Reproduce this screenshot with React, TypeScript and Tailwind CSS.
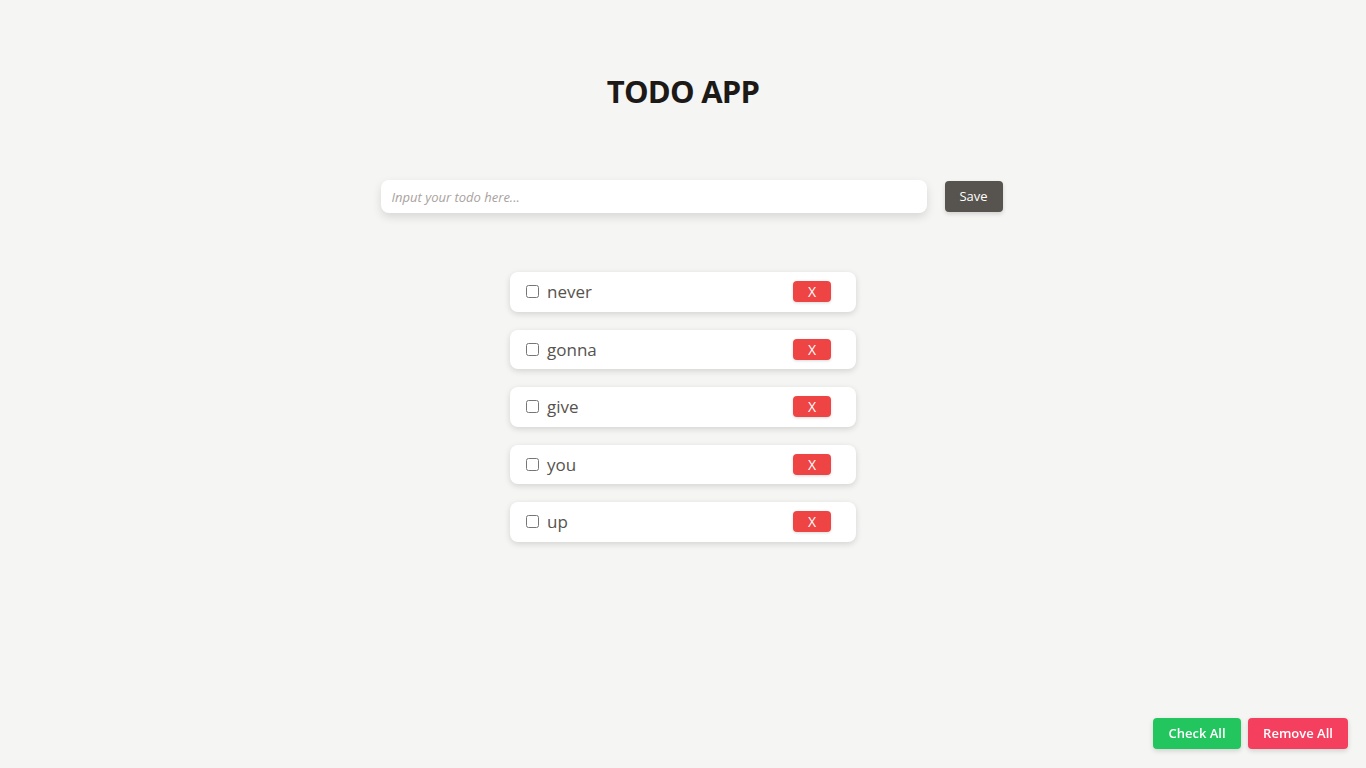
import { useState } from "react";

const FONT = { fontFamily: '"Open Sans", "Noto Sans", sans-serif' };

const START = ["never", "gonna", "give", "you", "up"];

export default function App() {
  const [todos, setTodos] = useState(START.map((t) => ({ text: t, done: false })));
  const [input, setInput] = useState("");

  function save() {
    if (!input.trim()) return;
    setTodos([...todos, { text: input.trim(), done: false }]);
    setInput("");
  }

  return (
    <div className="min-h-screen bg-[#f5f5f4] text-[#1c1917]" style={FONT}>
      <h1 className="pt-[70px] text-center text-[31px] font-bold tracking-tight leading-[42px]">
        TODO APP
      </h1>

      <div className="mt-[68px] flex justify-center pl-[17px]">
        <input
          value={input}
          onChange={(e) => setInput(e.target.value)}
          placeholder="Input your todo here..."
          className="h-[33px] w-[546px] rounded-lg bg-white px-[11px] text-[13px] shadow-[0_4px_10px_rgba(0,0,0,0.12)] outline-none placeholder:italic placeholder:text-[#a8a29e]"
        />
        <button
          onClick={save}
          className="ml-[18px] mt-px h-[31px] w-[58px] rounded-[4px] bg-[#57534e] text-[13px] text-white shadow-[0_2px_4px_rgba(0,0,0,0.15)]"
        >
          Save
        </button>
      </div>

      <ul className="mt-[59px] flex flex-col items-center gap-[18px]">
        {todos.map((t, i) => (
          <li
            key={i}
            className="flex h-[39.5px] w-[346px] items-center justify-between rounded-lg bg-white pl-4 pr-[25px] shadow-[0_2px_6px_rgba(0,0,0,0.14)]"
          >
            <label className="flex items-center gap-2 text-[17px] text-[#57534e]">
              <input
                type="checkbox"
                checked={t.done}
                onChange={() =>
                  setTodos(todos.map((x, j) => (j === i ? { ...x, done: !x.done } : x)))
                }
                className="h-[13px] w-[13px]"
              />
              <span className={t.done ? "line-through" : ""}>{t.text}</span>
            </label>
            <button
              onClick={() => setTodos(todos.filter((_, j) => j !== i))}
              className="h-[21px] w-[38px] rounded-[4px] bg-[#ef4444] text-[14px] text-white shadow-[0_1px_3px_rgba(0,0,0,0.15)]"
            >
              X
            </button>
          </li>
        ))}
      </ul>

      <div className="fixed bottom-[19px] right-[18px] flex gap-[7px]">
        <button
          onClick={() => setTodos(todos.map((x) => ({ ...x, done: true })))}
          className="h-[31px] w-[88px] rounded-[4px] bg-[#22c55e] text-[13px] font-semibold text-white shadow-[0_2px_5px_rgba(0,0,0,0.15)]"
        >
          Check All
        </button>
        <button
          onClick={() => setTodos([])}
          className="h-[31px] w-[100px] rounded-[4px] bg-[#f43f5e] text-[13px] font-semibold text-white shadow-[0_2px_5px_rgba(0,0,0,0.15)]"
        >
          Remove All
        </button>
      </div>
    </div>
  );
}
